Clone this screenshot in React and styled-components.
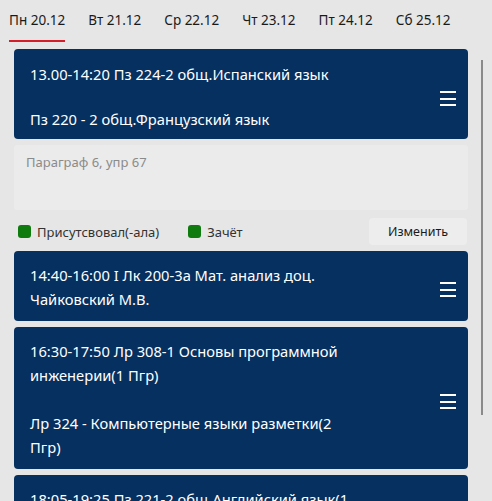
import React from "react";
import styled, { createGlobalStyle } from "styled-components";

const Global = createGlobalStyle`
  html, body { margin: 0; padding: 0; background: #e6e6e6; }
  body { font-family: "Noto Sans", "Open Sans", sans-serif; }
  * { box-sizing: border-box; }
`;

const Page = styled.div`
  position: relative;
  width: 492px;
  height: 501px;
  overflow: hidden;
  background: #e6e6e6;
`;

const TabBar = styled.div`
  display: flex;
  gap: 23px;
  padding-left: 9px;
  margin-bottom: 7px;
`;

const Tab = styled.div`
  font-size: 13.5px;
  line-height: 20px;
  color: #1a1a1a;
  padding: 10px 0 10px;
  border-bottom: 2px solid ${(p) => (p.$active ? "#d41f2b" : "transparent")};
  white-space: nowrap;
`;

const List = styled.div`
  display: flex;
  flex-direction: column;
  gap: 6px;
  padding: 0 24px 0 14px;
`;

const Card = styled.div`
  display: flex;
  align-items: center;
  background: #06305f;
  border-radius: 4px;
  color: #ffffff;
  padding: ${(p) => p.$pad || "12px 12px 10px 16px"};
`;

const CardText = styled.div`
  flex: 1;
  font-size: 14.7px;
  line-height: 24px;
  white-space: nowrap;
`;

const Gap = styled.div`
  height: ${(p) => p.$h}px;
`;

const Menu = styled.svg`
  flex: none;
  width: 16px;
  height: 16px;
  margin-top: 5px;
`;

const Notes = styled.div`
  background: #ebebeb;
  border-radius: 3px;
  height: 65px;
  padding: 8px 12px;
  font-size: 13px;
  line-height: 18px;
  color: #8a8a8a;
`;

const Checks = styled.div`
  display: flex;
  align-items: center;
  height: 27px;
  margin-top: 8px;
`;

const Check = styled.div`
  display: flex;
  align-items: center;
  gap: 6px;
  margin-left: ${(p) => p.$ml}px;
  font-size: 13px;
  color: #333333;
`;

const Box = styled.span`
  width: 13px;
  height: 13px;
  border-radius: 3px;
  background: #0f7b0f;
`;

const Button = styled.div`
  margin-left: auto;
  width: 98px;
  height: 27px;
  margin-right: 1px;
  border-radius: 4px;
  background: #ededed;
  display: flex;
  align-items: center;
  justify-content: center;
  font-size: 12.5px;
  color: #1a1a1a;
`;

const ScrollThumb = styled.div`
  position: absolute;
  left: 481px;
  top: 60px;
  width: 2px;
  height: 355px;
  background: #8a8a8a;
`;

const MenuIcon = () => (
  <Menu viewBox="0 0 16 16">
    <rect x="0" y="0" width="16" height="2" fill="#fff" />
    <rect x="0" y="7" width="16" height="2" fill="#fff" />
    <rect x="0" y="13" width="16" height="2" fill="#fff" />
  </Menu>
);

const tabs = ["Пн 20.12", "Вт 21.12", "Ср 22.12", "Чт 23.12", "Пт 24.12", "Сб 25.12"];

export default function App() {
  return (
    <Page>
      <Global />
      <TabBar>
        {tabs.map((t, i) => (
          <Tab key={t} $active={i === 0}>
            {t}
          </Tab>
        ))}
      </TabBar>
      <List>
        <Card $pad="13px 12px 8px 16px">
          <CardText>
            <div>13.00-14:20 Пз 224-2 общ.Испанский язык</div>
            <Gap $h={21} />
            <div>Пз 220 - 2 общ.Французский язык</div>
          </CardText>
          <MenuIcon />
        </Card>
        <div>
          <Notes>Параграф 6, упр 67</Notes>
          <Checks>
            <Check $ml={4}>
              <Box />
              Присутсвовал(-ала)
            </Check>
            <Check $ml={29}>
              <Box />
              Зачёт
            </Check>
            <Button>Изменить</Button>
          </Checks>
        </div>
        <Card>
          <CardText>
            <div>14:40-16:00 I Лк 200-3а Мат. анализ доц.</div>
            <div>Чайковский М.В.</div>
          </CardText>
          <MenuIcon />
        </Card>
        <Card>
          <CardText>
            <div>16:30-17:50 Лр 308-1 Основы программной</div>
            <div>инженерии(1 Пгр)</div>
            <Gap $h={24} />
            <div>Лр 324 - Компьютерные языки разметки(2</div>
            <div>Пгр)</div>
          </CardText>
          <MenuIcon />
        </Card>
        <Card>
          <CardText>
            <div>18:05-19:25 Пз 221-2 общ.Английский язык(1</div>
            <div>Пгр)</div>
          </CardText>
          <MenuIcon />
        </Card>
      </List>
      <ScrollThumb />
    </Page>
  );
}
